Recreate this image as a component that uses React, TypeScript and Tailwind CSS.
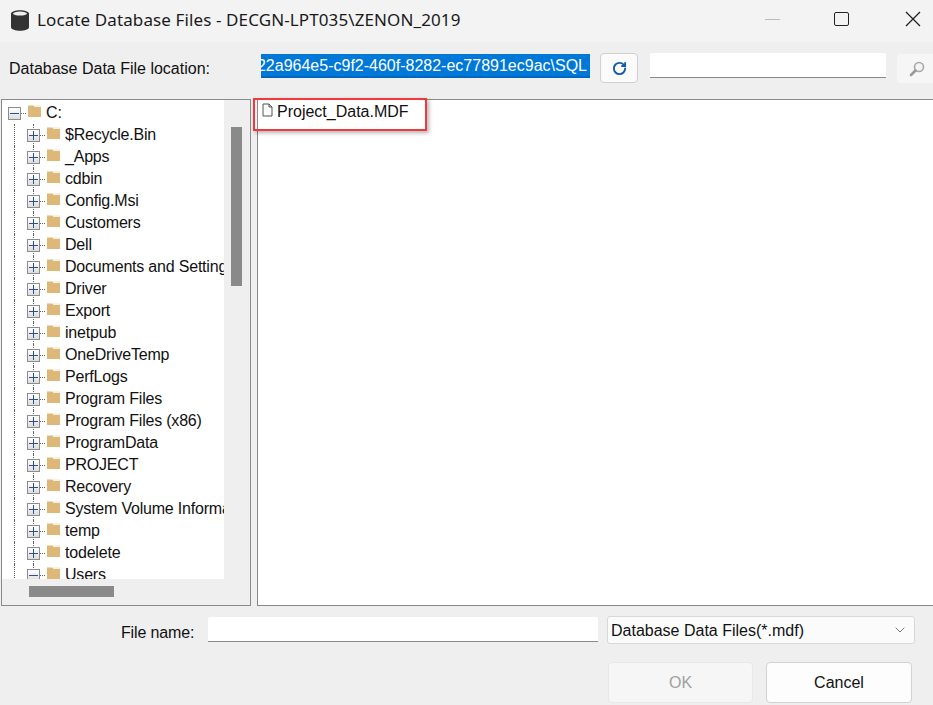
import React from "react";
import { RotateCw, ChevronDown } from "lucide-react";

const FOLDERS = [
  "$Recycle.Bin",
  "_Apps",
  "cdbin",
  "Config.Msi",
  "Customers",
  "Dell",
  "Documents and Settings",
  "Driver",
  "Export",
  "inetpub",
  "OneDriveTemp",
  "PerfLogs",
  "Program Files",
  "Program Files (x86)",
  "ProgramData",
  "PROJECT",
  "Recovery",
  "System Volume Information",
  "temp",
  "todelete",
  "Users",
];

function FolderIcon() {
  return (
    <svg width="15" height="13" viewBox="0 0 15 13" className="shrink-0">
      <path d="M1 0.5h5.5l1 1.5h6.5v10H1z" fill="#deb878" />
      <path d="M7 0.5h7v1H7z" fill="#f3e4c8" />
    </svg>
  );
}

function ToggleBox({ open }: { open?: boolean }) {
  return (
    <div className="relative flex h-[13px] w-[13px] shrink-0 items-center justify-center border border-[#8c8c8c] bg-gradient-to-b from-white to-[#dddddd]">
      <div className="h-px w-[9px] bg-[#2f4f8f]" />
      {!open && <div className="absolute h-[9px] w-px bg-[#2f4f8f]" />}
    </div>
  );
}

function TreeRow({ name, open }: { name: string; open?: boolean }) {
  return (
    <div className="flex h-[22px] items-center whitespace-nowrap">
      <div className="ml-[12px] w-[13px] shrink-0 self-stretch border-l border-dotted border-[#666666]" />
      <div className="relative flex w-[13px] shrink-0 items-center self-stretch">
        <div className="absolute left-[6px] top-0 h-full border-l border-dotted border-[#666666]" />
        <ToggleBox open={open} />
      </div>
      <div className="w-[5px] shrink-0 border-t border-dotted border-[#666666]" />
      <div className="ml-px -mt-[3px] shrink-0">
        <FolderIcon />
      </div>
      <span className="ml-[4px] shrink-0 tracking-[-0.2px]">{name}</span>
    </div>
  );
}

export default function App() {
  return (
    <div className="flex h-[705px] w-[933px] flex-col overflow-hidden bg-[#efefef] font-['Liberation_Sans',Arial,sans-serif] text-[16px] text-[#111111]">
      {/* Title bar */}
      <div className="flex h-[42px] shrink-0 items-center bg-[#f3f3f3] pl-[11px]">
        <svg width="18" height="21" viewBox="0 0 18 21" className="-mt-[2px]">
          <path d="M0 4c0-5 18-5 18 0v13c0 5-18 5-18 0z" fill="#333333" />
          <ellipse cx="9" cy="3.6" rx="7" ry="2" fill="#f0f0f0" />
        </svg>
        <span className="ml-[8px] -mt-[2px] whitespace-nowrap font-['Noto_Sans',sans-serif] text-[17px] tracking-[0.11px] text-[#1a1a1a]">
          Locate Database Files - DECGN-LPT035\ZENON_2019
        </span>
        <div className="ml-auto flex items-center">
          <div className="-mt-[4px] h-px w-[15px] bg-[#bbbbbb]" />
          <div className="ml-[54px] -mt-[4px] h-[14px] w-[15px] rounded-[2px] border-[1.5px] border-[#222222]" />
          <svg width="16" height="16" viewBox="0 0 16 16" className="ml-[56px] mr-[12px] -mt-[4px]">
            <path d="M1 1l14 14M15 1L1 15" stroke="#222222" strokeWidth="1.3" />
          </svg>
        </div>
      </div>

      {/* Location row */}
      <div className="flex h-[57px] shrink-0 items-start pl-[9px]">
        <span className="mt-[15px] w-[252px] shrink-0 whitespace-nowrap">Database Data File location:</span>
        <div className="mt-[12px] flex h-[24px] w-[329px] shrink-0 justify-end overflow-hidden border-b-2 border-[#0067c0] bg-[#0078d7] pr-[3px] leading-[23px] whitespace-nowrap text-white">
          22a964e5-c9f2-460f-8282-ec77891ec9ac\SQL
        </div>
        <button className="ml-[10px] mt-[11px] flex h-[30px] w-[38px] shrink-0 items-center justify-center rounded-[4px] border border-[#d0d0d0] bg-[#fbfbfb]">
          <RotateCw size={15} strokeWidth={3} className="text-[#0f5ca8]" />
        </button>
        <div className="ml-[12px] mt-[11px] h-[25px] w-[236px] shrink-0 rounded-t-[2px] border-b border-[#8a8a8a] bg-white" />
        <button className="ml-[11px] mt-[12px] flex h-[29px] w-[40px] shrink-0 items-center rounded-[4px] bg-[#f6f6f6] pl-[12px]">
          <svg width="16" height="16" viewBox="0 0 16 16">
            <circle cx="10" cy="6" r="4.5" fill="#f4f4f4" stroke="#a8a8a8" strokeWidth="1.6" />
            <path d="M6.5 9.5L2 14" stroke="#999999" strokeWidth="2.6" strokeLinecap="round" />
          </svg>
        </button>
      </div>

      {/* Tree and file list */}
      <div className="flex h-[507px] shrink-0 gap-[6px] pl-px">
        <div className="relative flex w-[250px] shrink-0 flex-col border border-[#8a8a8a] bg-[#efefef]">
          <div className="flex h-[479px] shrink-0">
            <div className="w-[222px] shrink-0 overflow-hidden bg-white pt-[2px]">
              <div className="flex h-[22px] items-center whitespace-nowrap pl-[6px]">
                <ToggleBox open />
                <div className="w-[5px] shrink-0 border-t border-dotted border-[#666666]" />
                <div className="ml-px -mt-[3px] shrink-0">
                  <FolderIcon />
                </div>
                <span className="ml-[4px]">C:</span>
              </div>
              {FOLDERS.map((name) => (
                <TreeRow key={name} name={name} open={name === "Users"} />
              ))}
            </div>
            <div className="flex-1 pl-[7px] pt-[27px]">
              <div className="h-[159px] w-[11px] bg-[#8a8a8a]" />
            </div>
          </div>
          <div className="ml-[27px] mt-[7px] h-[11px] w-[85px] bg-[#8a8a8a]" />
        </div>

        <div className="relative flex-1 border-y border-l border-[#8a8a8a] bg-white">
          <div className="flex items-center pl-[4px]">
            <svg width="11" height="14" viewBox="0 0 11 14" className="-mt-[4px]">
              <path d="M1 1h6l3 3v9H1z" fill="#fafafa" stroke="#555555" />
              <path d="M7 1v3h3" fill="none" stroke="#555555" />
            </svg>
            <span className="ml-[4px]">Project_Data.MDF</span>
          </div>
          <div className="absolute -left-[5px] -top-[2px] h-[33px] w-[174px] border-2 border-[#ee3a3f] shadow-[2px_2px_4px_rgba(0,0,0,0.3)]" />
        </div>
      </div>

      {/* File name row */}
      <div className="flex h-[56px] shrink-0 items-start">
        <span className="ml-[121px] mt-[15px] w-[87px] shrink-0 whitespace-nowrap tracking-[-0.15px]">File name:</span>
        <div className="mt-[11px] h-[25px] w-[390px] shrink-0 rounded-t-[2px] border-b border-[#8a8a8a] bg-white" />
        <div className="ml-[9px] mt-[10px] flex h-[28px] w-[308px] shrink-0 items-center justify-between rounded-[3px] border border-[#d8d8d8] bg-[#fbfbfb] pl-[3px] pr-[6px]">
          <span className="whitespace-nowrap pt-px">Database Data Files(*.mdf)</span>
          <ChevronDown size={16} strokeWidth={1.2} className="text-[#555555]" />
        </div>
      </div>

      {/* Buttons */}
      <div className="flex shrink-0 pl-[608px]">
        <button className="flex h-[41px] w-[145px] items-center justify-center rounded-[4px] border border-[#e8e8e8] bg-[#f6f6f6] pt-px text-[#a0a0a0]">
          OK
        </button>
        <button className="ml-[13px] flex h-[41px] w-[146px] items-center justify-center rounded-[4px] border border-[#d2d2d2] bg-[#fdfdfd] pt-px">
          Cancel
        </button>
      </div>
    </div>
  );
}
